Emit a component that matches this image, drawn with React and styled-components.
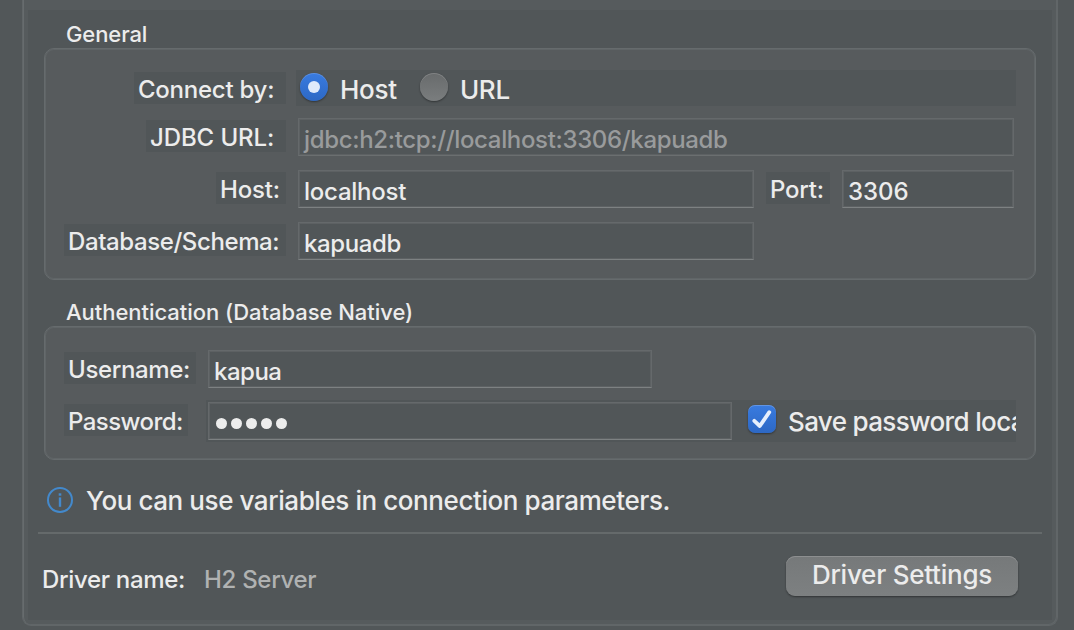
import React from "react";
import styled, { createGlobalStyle } from "styled-components";

const Global = createGlobalStyle`
  * { box-sizing: border-box; }
  body { margin: 0; background: #525759; overflow: hidden; }
`;

const Window = styled.main`
  width: 1074px;
  height: 630px;
  padding: 0 16px 4px 22px;
  background: #525759;
  font-family: Inter, "Liberation Sans", sans-serif;
  font-weight: 450;
  color: #ececec;
  overflow: hidden;
`;

const TabFrame = styled.div`
  height: 626px;
  padding: 10px 5px 5px;
  border: 1px solid #616668;
  border-top: 0;
  border-radius: 0 0 9px 9px;
  box-shadow: inset 1px 0 0 #676c6e, inset -1px -1px 0 #616668;
  background: #565b5d;
`;

const Page = styled.div`
  height: 610px;
  display: flex;
  flex-direction: column;
  background: #515658;
`;

const Text = styled.span`
  flex: none;
  font-size: ${(p) => p.$size || 24}px;
  letter-spacing: ${(p) => p.$track || 0}px;
  line-height: 32px;
  white-space: pre;
  color: ${(p) => p.$color || "#ececec"};
`;

const GroupTitle = styled.div`
  height: ${(p) => p.$height}px;
  padding: ${(p) => p.$height - 30}px 0 0 38px;
  display: flex;
  align-items: flex-start;
`;

const Group = styled.section`
  height: ${(p) => p.$height}px;
  margin: 0 16px;
  padding: ${(p) => (p.$top || 20) + 1}px 19px 0;
  border: 1px solid #666b6d;
  border-radius: 10px;
  box-shadow: inset 0 0 0 1px #606567;
  background: #575b5d;
`;

const Row = styled.div`
  display: flex;
  align-items: flex-start;
  height: 38px;
  margin-bottom: ${(p) => (p.$gap === undefined ? 14 : p.$gap)}px;
`;

const LabelCell = styled.div`
  width: ${(p) => p.$width}px;
  margin-right: ${(p) => p.$gap || 12}px;
  display: flex;
  justify-content: ${(p) => (p.$start ? "flex-start" : "flex-end")};
  padding-top: 2px;
`;

const Label = styled.label`
  width: ${(p) => p.$width}px;
  height: 32px;
  padding: 2px 0 0 4px;
  background: #515658;
  display: flex;
  align-items: flex-start;
`;

const Field = styled.div`
  flex: none;
  width: ${(p) => p.$width}px;
  height: 38px;
  padding: 5px 0 0 5px;
  border: 1px solid #65696b;
  border-bottom-color: ${(p) => (p.$dim ? "#6b6f70" : "#7d8182")};
  box-shadow: inset 0 0 0 1px #5d6163;
  background: #515658;
  display: flex;
  align-items: flex-start;
`;

const Options = styled.div`
  width: 720px;
  height: 36px;
  padding-left: 4px;
  background: #515658;
  display: flex;
  align-items: flex-start;
  ${Text} { padding-top: 4px; }
`;

const Radio = styled.span`
  flex: none;
  width: 28px;
  height: 28px;
  margin: 3px 12px 0 ${(p) => (p.$on ? 0 : 23)}px;
  border-radius: 50%;
  display: grid;
  place-items: center;
  background: ${(p) => (p.$on ? "linear-gradient(#397be0, #2d68c4)" : "linear-gradient(#686b6c, #7a7d7e)")};
  box-shadow: 0 1px 2px rgba(0, 0, 0, 0.4), inset 0 1px 0 rgba(255, 255, 255, 0.16);
  &::after {
    content: "";
    width: 12px;
    height: 12px;
    border-radius: 50%;
    background: ${(p) => (p.$on ? "#dfeafb" : "transparent")};
  }
`;

const PasswordBar = styled.div`
  width: 810px;
  height: 42px;
  margin: -2px 0 0 -2px;
  padding-left: 2px;
  background: #515658;
  display: flex;
  align-items: center;
  overflow: hidden;
  > ${Text} { padding-top: 2px; }
`;

const Bullets = styled.span`
  display: flex;
  gap: 4px;
  padding: 10px 0 0 2px;
  i { width: 11px; height: 11px; border-radius: 50%; background: #ececec; }
`;

const Checkbox = styled.span`
  flex: none;
  width: 28px;
  height: 28px;
  margin: 0 12px 4px 16px;
  border-radius: 7px;
  background: linear-gradient(#397be0, #2d68c4);
  box-shadow: 0 1px 2px rgba(0, 0, 0, 0.4), inset 0 1px 0 rgba(255, 255, 255, 0.2);
  svg { display: block; }
`;

const Hint = styled.div`
  height: 72px;
  padding: 9px 0 0 19px;
  display: flex;
  align-items: center;
  gap: 13px;
  svg { display: block; flex: none; margin-bottom: 1px; }
`;

const Divider = styled.div`
  height: 2px;
  margin: 0 10px;
  background: #656a6b;
`;

const Footer = styled.footer`
  height: 86px;
  padding: 22px 34px 0 14px;
  display: flex;
  align-items: flex-start;
`;

const DriverInfo = styled.div`
  flex: 1;
  display: flex;
  padding-top: 8px;
`;

const DriverKey = styled.div`
  width: 162px;
  display: flex;
`;

const Button = styled.button`
  width: 232px;
  height: 40px;
  padding: 0 0 2px;
  border: 0;
  border-radius: 9px;
  font-family: inherit;
  font-weight: inherit;
  background: linear-gradient(#76797a, #7d8081);
  box-shadow: 0 1px 2px rgba(0, 0, 0, 0.4), inset 0 1px 0 #8d8f90;
  display: flex;
  align-items: center;
  justify-content: center;
`;

export default function App() {
  return (
    <>
      <Global />
      <Window>
        <TabFrame>
          <Page>
            <GroupTitle $height={38}>
              <Text $size={22} $track={-0.1}>General</Text>
            </GroupTitle>
            <Group $height={232}>
              <Row $gap={10}>
                <LabelCell $width={222} $gap={10}>
                  <Label $width={152}><Text $track={-0.25}>Connect by:</Text></Label>
                </LabelCell>
                <Options>
                  <Radio $on />
                  <Text $size={26} $track={-0.25}>Host</Text>
                  <Radio />
                  <Text $size={26} $track={-0.3}>URL</Text>
                </Options>
              </Row>
              <Row>
                <LabelCell $width={222}>
                  <Label $width={140}><Text $track={-0.1}>JDBC URL:</Text></Label>
                </LabelCell>
                <Field $width={716} $dim><Text $color="#999b9c" $track={-0.34}>jdbc:h2:tcp://localhost:3306/kapuadb</Text></Field>
              </Row>
              <Row>
                <LabelCell $width={222}>
                  <Label $width={70}><Text $track={-0.15}>Host:</Text></Label>
                </LabelCell>
                <Field $width={456}><Text $track={-0.25}>localhost</Text></Field>
                <LabelCell $width={76}>
                  <Label $width={64}><Text $track={-0.2}>Port:</Text></Label>
                </LabelCell>
                <Field $width={172}><Text>3306</Text></Field>
              </Row>
              <Row>
                <LabelCell $width={222}>
                  <Label $width={222}><Text $track={-0.4}>Database/Schema:</Text></Label>
                </LabelCell>
                <Field $width={456}><Text $track={-0.4}>kapuadb</Text></Field>
              </Row>
            </Group>
            <GroupTitle $height={46}>
              <Text $size={22} $track={-0.04}>Authentication (Database Native)</Text>
            </GroupTitle>
            <Group $height={134} $top={22}>
              <Row>
                <LabelCell $width={132} $start>
                  <Label $width={132}><Text $track={-0.35}>Username:</Text></Label>
                </LabelCell>
                <Field $width={444}><Text $track={-0.5}>kapua</Text></Field>
              </Row>
              <Row>
                <LabelCell $width={132} $start>
                  <Label $width={124}><Text $track={-0.55}>Password:</Text></Label>
                </LabelCell>
                <PasswordBar>
                  <Field $width={524}>
                    <Bullets><i /><i /><i /><i /><i /></Bullets>
                  </Field>
                  <Checkbox>
                    <svg width="28" height="28" viewBox="0 0 28 28" fill="none" stroke="#e6effc" strokeWidth="3.8" strokeLinecap="round" strokeLinejoin="round">
                      <path d="M6.3 15.8 L11.8 21 L21.3 7.2" />
                    </svg>
                  </Checkbox>
                  <Text $size={26} $track={-0.65}>Save password locally</Text>
                </PasswordBar>
              </Row>
            </Group>
            <Hint>
              <svg width="26" height="26" viewBox="0 0 26 26" fill="none" stroke="#4389cc" strokeWidth="2">
                <circle cx="13" cy="13" r="12" />
                <path d="M13 10.4V19.8" strokeWidth="2.4" />
                <path d="M13 6.3V8.7" strokeWidth="2.6" />
              </svg>
              <Text $size={26} $track={-0.42}>You can use variables in connection parameters.</Text>
            </Hint>
            <Divider />
            <Footer>
              <DriverInfo>
                <DriverKey><Text $track={-0.32}>Driver name:</Text></DriverKey>
                <Text $color="#b0b2b2" $track={-0.3}>H2 Server</Text>
              </DriverInfo>
              <Button type="button"><Text $size={26} $track={-0.24}>Driver Settings</Text></Button>
            </Footer>
          </Page>
        </TabFrame>
      </Window>
    </>
  );
}
